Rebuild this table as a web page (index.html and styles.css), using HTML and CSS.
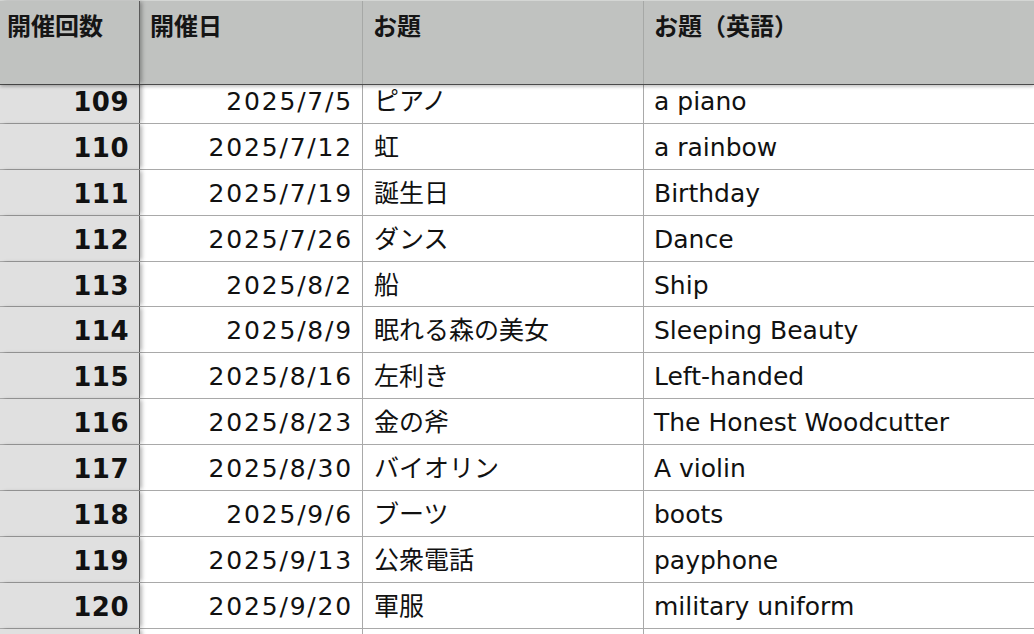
FILE: index.html
```html
<!DOCTYPE html>
<html lang="ja">
<head>
<meta charset="utf-8">
<title>お題一覧</title>
<link rel="stylesheet" href="styles.css">
</head>
<body>
<div class="sheet">
  <div class="head">
    <div class="hc c1">開催回数</div>
    <div class="hc c2">開催日</div>
    <div class="hc c3">お題</div>
    <div class="hc c4">お題（英語）</div>
  </div>
  <div class="body">
    <div class="rows">
      <div class="row"><div class="cell c1 num">109</div><div class="cell c2 date">2025/7/5</div><div class="cell c3">ピアノ</div><div class="cell c4">a piano</div></div>
      <div class="row"><div class="cell c1 num">110</div><div class="cell c2 date">2025/7/12</div><div class="cell c3">虹</div><div class="cell c4">a rainbow</div></div>
      <div class="row"><div class="cell c1 num">111</div><div class="cell c2 date">2025/7/19</div><div class="cell c3">誕生日</div><div class="cell c4">Birthday</div></div>
      <div class="row"><div class="cell c1 num">112</div><div class="cell c2 date">2025/7/26</div><div class="cell c3">ダンス</div><div class="cell c4">Dance</div></div>
      <div class="row"><div class="cell c1 num">113</div><div class="cell c2 date">2025/8/2</div><div class="cell c3">船</div><div class="cell c4">Ship</div></div>
      <div class="row"><div class="cell c1 num">114</div><div class="cell c2 date">2025/8/9</div><div class="cell c3">眠れる森の美女</div><div class="cell c4">Sleeping Beauty</div></div>
      <div class="row"><div class="cell c1 num">115</div><div class="cell c2 date">2025/8/16</div><div class="cell c3">左利き</div><div class="cell c4">Left-handed</div></div>
      <div class="row"><div class="cell c1 num">116</div><div class="cell c2 date">2025/8/23</div><div class="cell c3">金の斧</div><div class="cell c4">The Honest Woodcutter</div></div>
      <div class="row"><div class="cell c1 num">117</div><div class="cell c2 date">2025/8/30</div><div class="cell c3">バイオリン</div><div class="cell c4">A violin</div></div>
      <div class="row"><div class="cell c1 num">118</div><div class="cell c2 date">2025/9/6</div><div class="cell c3">ブーツ</div><div class="cell c4">boots</div></div>
      <div class="row"><div class="cell c1 num">119</div><div class="cell c2 date">2025/9/13</div><div class="cell c3">公衆電話</div><div class="cell c4">payphone</div></div>
      <div class="row"><div class="cell c1 num">120</div><div class="cell c2 date">2025/9/20</div><div class="cell c3">軍服</div><div class="cell c4">military uniform</div></div>
      <div class="row"><div class="cell c1 num"></div><div class="cell c2 date"></div><div class="cell c3"></div><div class="cell c4"></div></div>
    </div>
  </div>
</div>
</body>
</html>
```
FILE: styles.css
```css
html, body {
  margin: 0;
  padding: 0;
  background: #ffffff;
}

.sheet {
  width: 1034px;
  height: 634px;
  overflow: hidden;
  display: flex;
  flex-direction: column;
  font-family: "DejaVu Sans", "Noto Sans CJK JP", sans-serif;
  color: #111;
}

.head {
  display: flex;
  height: 85px;
  flex: 0 0 85px;
  background: #c0c2c0;
  border-top: 1px solid #d4d6d4;
  border-bottom: 1px solid #4a4a4a;
  box-sizing: border-box;
  position: relative;
  z-index: 3;
  box-shadow: 0 2px 3px rgba(0, 0, 0, 0.22);
}

.hc {
  font-family: "Noto Sans CJK JP", sans-serif;
  font-weight: 700;
  font-size: 24px;
  line-height: 30px;
  padding: 9px 10px 0;
  border-right: 1px solid #a6a8a6;
  box-sizing: border-box;
  white-space: nowrap;
  color: #151515;
}

.hc.c1 {
  padding-left: 7px;
  border-right: 1px solid #5a5a5a;
  position: relative;
  z-index: 2;
  box-shadow: 3px 0 4px -1px rgba(0, 0, 0, 0.3);
}

.c1 { width: 140px; flex: 0 0 140px; }
.c2 { width: 223px; flex: 0 0 223px; }
.c3 { width: 281px; flex: 0 0 281px; }
.c4 { flex: 1 1 auto; border-right: none !important; }

.body {
  flex: 1 1 auto;
  overflow: hidden;
}

.rows {
  margin-top: -7px;
}

.row {
  display: flex;
  height: 45.9px;
  border-bottom: 1px solid #a9a9a9;
  box-sizing: border-box;
}

.cell {
  display: flex;
  align-items: center;
  font-size: 25px;
  line-height: 30px;
  white-space: nowrap;
  border-right: 1px solid #a9a9a9;
  box-sizing: border-box;
  padding: 3px 10px 0 11px;
}

.cell.c1 {
  background: #e0e0e0;
  border-right: 1px solid #5a5a5a;
  position: relative;
  z-index: 2;
  box-shadow: 3px 0 4px -1px rgba(0, 0, 0, 0.3);
}

.num {
  justify-content: flex-end;
  font-weight: 700;
  font-size: 26px;
  padding-right: 10px;
  letter-spacing: 0.5px;
}

.date {
  justify-content: flex-end;
  letter-spacing: 1.8px;
  padding-right: 9px;
}

.cell.c4 {
  padding-left: 10px;
}
```
